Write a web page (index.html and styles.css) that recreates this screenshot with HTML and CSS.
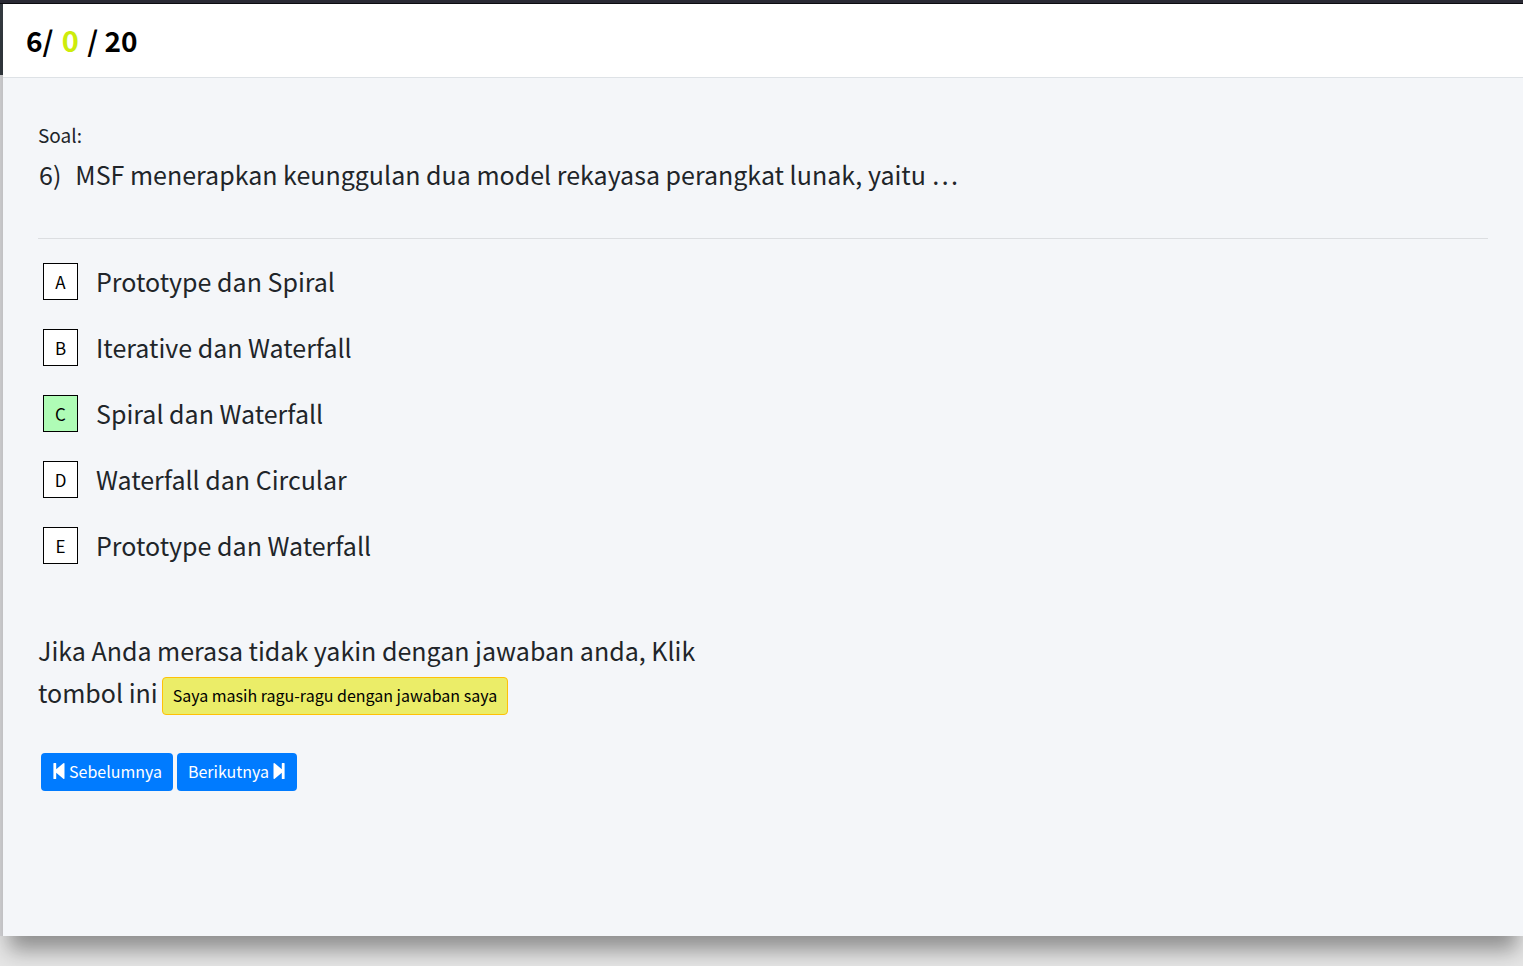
FILE: index.html
```html
<!DOCTYPE html>
<html lang="id">
<head>
<meta charset="utf-8">
<meta name="viewport" content="width=device-width, initial-scale=1">
<title>Soal 6</title>
<link rel="stylesheet" href="styles.css">
</head>
<body>
<div class="window">
  <header class="counter">
    <h1 class="counter-text">6/ <span class="doubt-count">0</span> / 20</h1>
  </header>
  <main class="quiz">
    <p class="label">Soal:</p>
    <div class="question"><span class="number">6)</span><p class="question-text">MSF menerapkan keunggulan dua model rekayasa perangkat lunak, yaitu …</p></div>
    <hr class="divider">
    <ul class="answers">
      <li class="answer"><button class="choice" id="a" aria-labelledby="a ta">A</button><span id="ta">Prototype dan Spiral</span></li>
      <li class="answer"><button class="choice" id="b" aria-labelledby="b tb">B</button><span id="tb">Iterative dan Waterfall</span></li>
      <li class="answer"><button class="choice selected" id="c" aria-labelledby="c tc" aria-pressed="true">C</button><span id="tc">Spiral dan Waterfall</span></li>
      <li class="answer"><button class="choice" id="d" aria-labelledby="d td">D</button><span id="td">Waterfall dan Circular</span></li>
      <li class="answer"><button class="choice" id="e" aria-labelledby="e te">E</button><span id="te">Prototype dan Waterfall</span></li>
    </ul>
    <div class="hint">
      <span>Jika Anda merasa tidak yakin dengan jawaban anda, Klik</span>
      <div class="hint-action"><span>tombol ini</span><button class="button doubt">Saya masih ragu-ragu dengan jawaban saya</button></div>
    </div>
    <nav class="pager">
      <button class="button primary"><svg class="icon" viewBox="0 0 14 18" aria-hidden="true"><path d="M2 1h1.600q.6 0 .6.6v5.700l7.100-6q1.200-.8 1.200.5v14.400q0 1.300-1.200.5l-7.100-6v5.700q0 .6-.6.6H2q-.6 0-.6-.6V1.600q0-.6.6-.6z"/></svg>Sebelumnya</button>
      <button class="button primary">Berikutnya<svg class="icon" viewBox="0 0 14 18" aria-hidden="true"><path d="M12 1h-1.600q-.6 0-.6.6v5.700l-7.100-6Q1.500.5 1.500 1.800v14.400q0 1.300 1.200.5l7.100-6v5.700q0 .6.6.6H12q.6 0 .6-.6V1.600q0-.6-.6-.6z"/></svg></button>
    </nav>
  </main>
</div>
</body>
</html>
```
FILE: styles.css
```css
* { box-sizing: border-box; }

body {
  min-height: 100vh;
  margin: 0;
  padding: 4px 0 30px 3px;
  display: flex;
  background: linear-gradient(#2a2a34 0 3px, #0c0c10 3px 4px, #343a40 4px 75px, #d8d8db 75px 936px, #e6e6e6 936px);
  color: #212529;
  font-family: "Noto Sans CJK JP", "Noto Sans", sans-serif;
  overflow-x: hidden;
}

.window {
  flex: 1;
  display: flex;
  flex-direction: column;
  background: #f4f6f9;
  box-shadow: 0 20px 20px -6px rgba(0, 0, 0, .38);
}

.counter {
  padding: 16px 23px 17px;
  border-bottom: 1px solid #dee2e6;
  background: #fff;
}

.counter-text {
  margin: 0;
  color: #000;
  font-size: 28px;
  line-height: 40px;
}

.doubt-count {
  margin: 0 2px;
  color: #cdec0c;
  font-size: 29px;
  line-height: 1;
}

.quiz { padding: 41px 35px; }

.label {
  margin: 0;
  font-size: 19px;
  line-height: 32px;
}

.question {
  display: flex;
  gap: 14px;
  padding: 3px 1px 0;
  font-size: 25px;
  line-height: 40px;
}

.question-text { margin: 0; }

.divider {
  margin: 44px 0 24px;
  border: 0;
  border-top: 1px solid #dcdee1;
}

.answers {
  display: flex;
  flex-direction: column;
  gap: 29px;
  margin: 0;
  padding: 0 5px;
  list-style: none;
}

.answer {
  display: flex;
  align-items: center;
  gap: 18px;
  font-size: 25px;
  line-height: 37px;
}

.choice {
  width: 35px;
  height: 37px;
  padding: 0;
  border: 1px solid #000;
  background: #fff;
  color: #000;
  font: inherit;
  font-size: 17px;
  line-height: 32px;
}

.choice.selected { background: #affcb6; }

.hint {
  margin-top: 65px;
  font-size: 25px;
  line-height: 42px;
}

.hint-action {
  display: flex;
  flex-wrap: wrap;
  align-items: flex-start;
  gap: 4px;
}

.button {
  height: 38px;
  padding: 0 10px 2px;
  border: 1px solid transparent;
  border-radius: 4px;
  font-family: inherit;
  font-size: 16px;
  line-height: 24px;
}

.doubt {
  margin-top: 6px;
  border-color: #ffc107;
  background: #ebed68;
  color: #000;
}

.pager {
  display: flex;
  gap: 4px;
  margin-top: 38px;
  padding: 0 3px;
}

.primary {
  display: flex;
  align-items: center;
  gap: 3px;
  background: #007bff;
  color: #fff;
}

.icon {
  width: 14px;
  height: 18px;
  fill: currentColor;
}
```
